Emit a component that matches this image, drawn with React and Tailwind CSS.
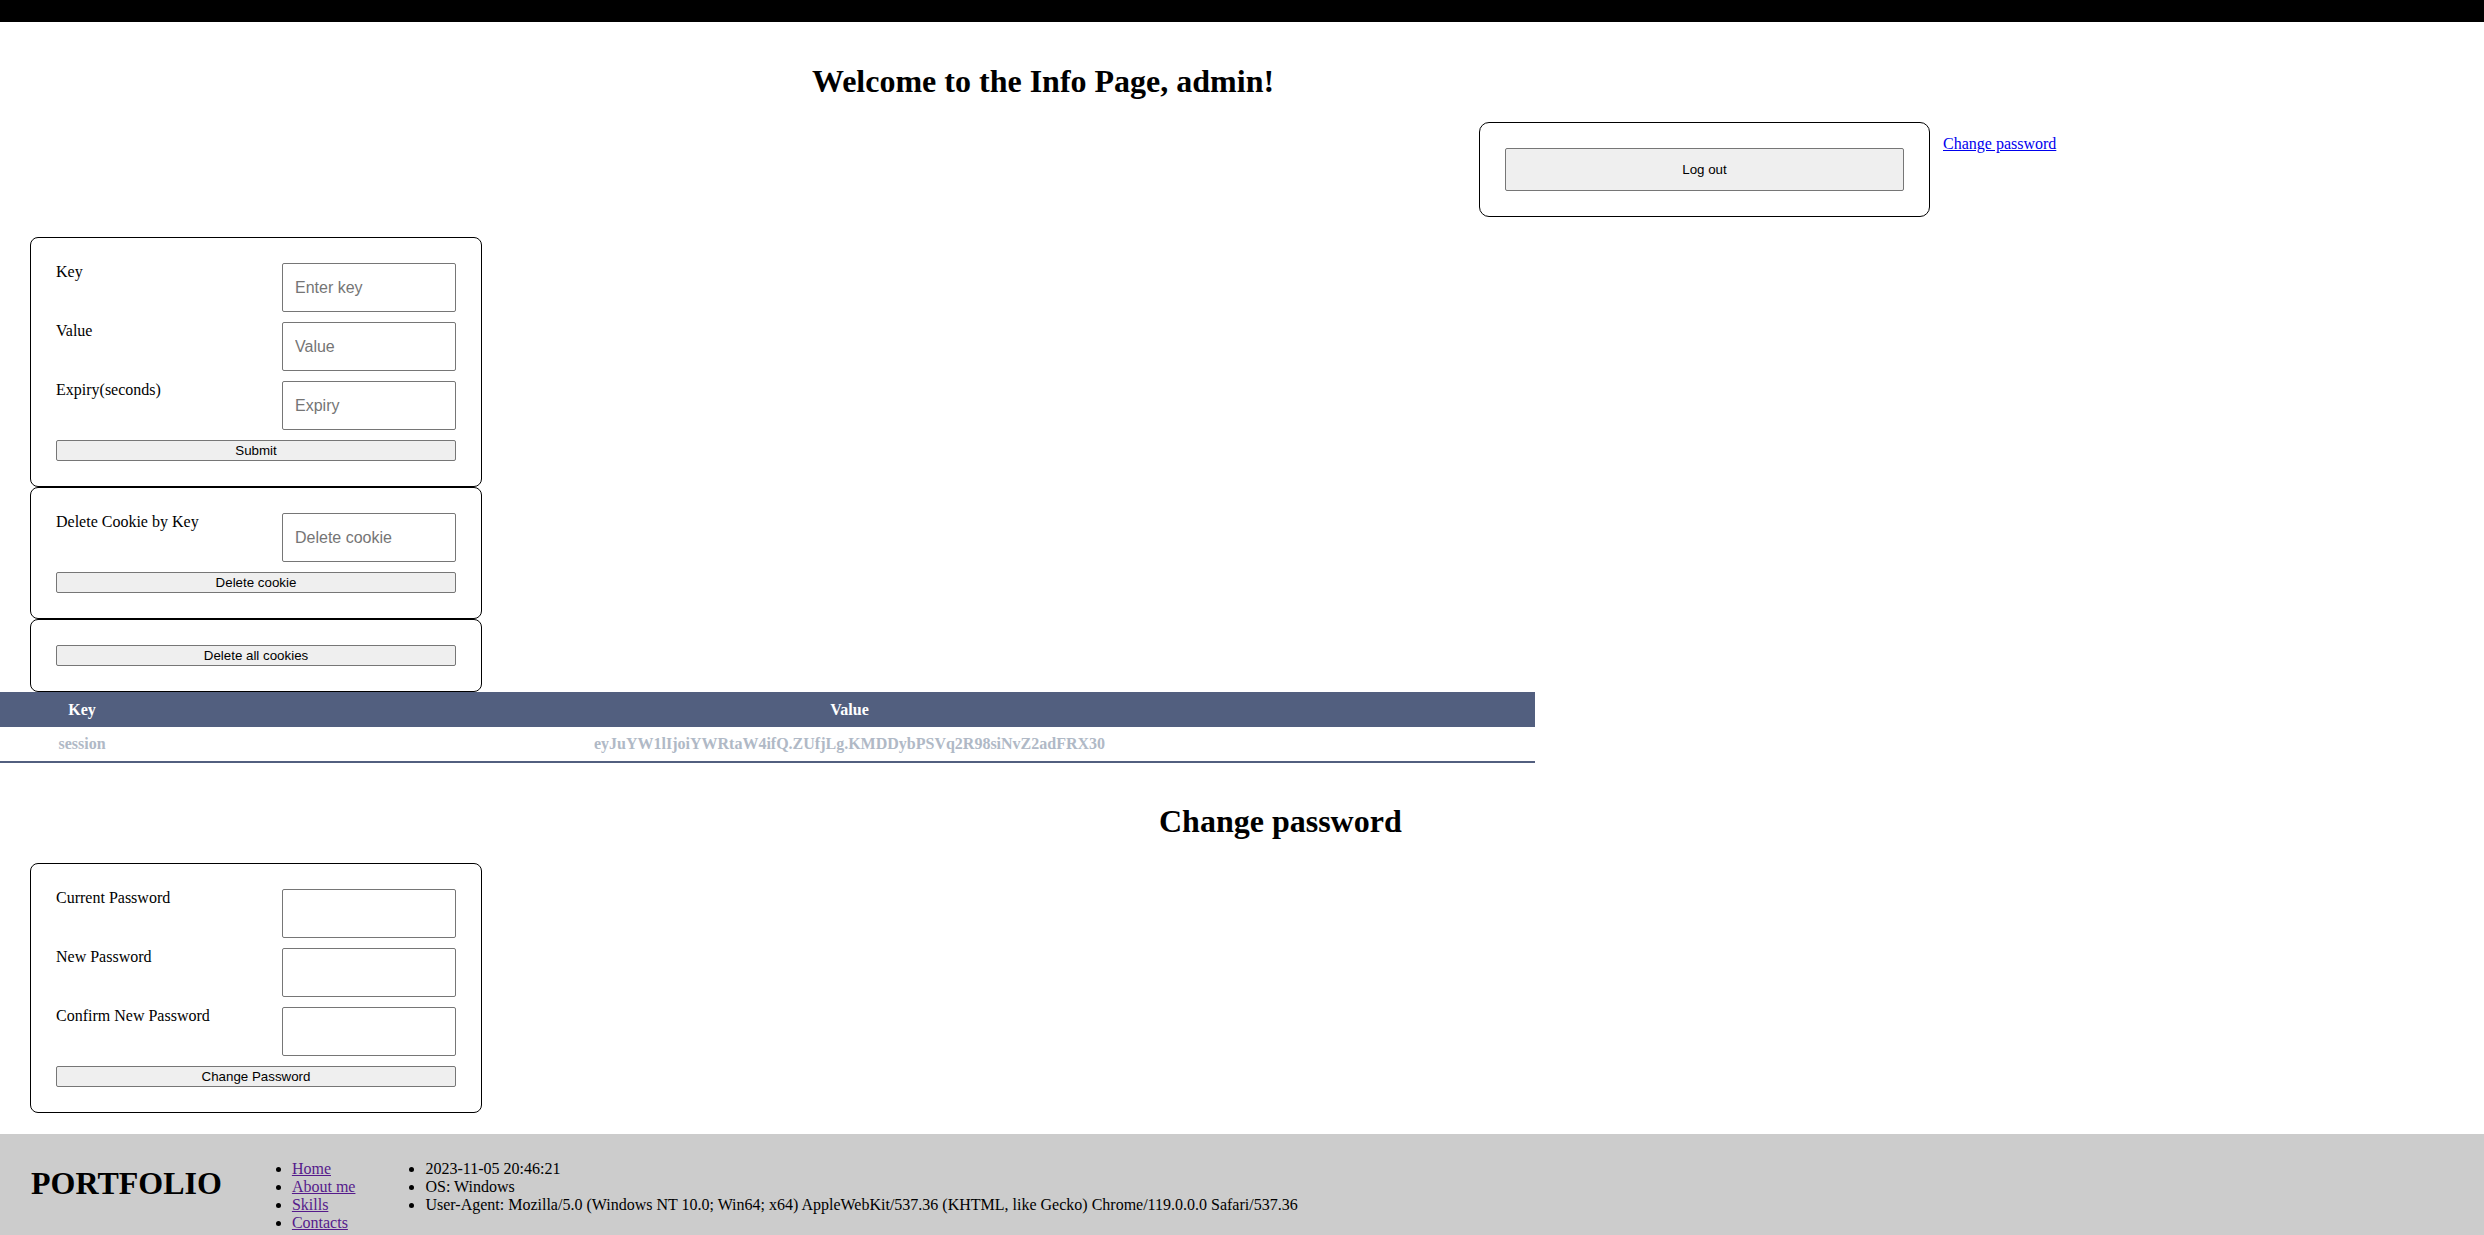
import React from "react";

const serif = "font-['Liberation_Serif',serif]";
const sans = "font-['Liberation_Sans',Arial,sans-serif]";

function Btn({ children, className = "" }) {
  return (
    <button
      className={`${sans} block w-full bg-[#efefef] border border-[#767676] rounded-[2px] text-[13.33px] text-black ${className}`}
    >
      {children}
    </button>
  );
}

function Field({ label, placeholder }) {
  return (
    <>
      <div className="text-[16px] leading-[18px]">{label}</div>
      <input
        placeholder={placeholder}
        className={`${sans} block w-[174px] h-[49px] border border-[#767676] rounded-[2px] px-[12px] text-[16px] placeholder:text-[#757575]`}
      />
    </>
  );
}

function FormBox({ fields, button }) {
  return (
    <div className="w-[452px] border border-black rounded-[8px] p-[25px]">
      {fields.length > 0 && (
        <div className="grid grid-cols-[226px_174px] gap-y-[10px] mb-[10px]">
          {fields.map((f) => (
            <Field key={f.label} label={f.label} placeholder={f.placeholder} />
          ))}
        </div>
      )}
      <Btn className="h-[21px]">{button}</Btn>
    </div>
  );
}

export default function App() {
  const cookieFields = [
    { label: "Key", placeholder: "Enter key" },
    { label: "Value", placeholder: "Value" },
    { label: "Expiry(seconds)", placeholder: "Expiry" },
  ];
  const pwFields = [
    { label: "Current Password", placeholder: "" },
    { label: "New Password", placeholder: "" },
    { label: "Confirm New Password", placeholder: "" },
  ];

  return (
    <div className={`${serif} text-black bg-white w-[2484px] min-h-[1235px]`}>
      <div className="h-[22px] bg-black" />

      <h1 className="w-[2086px] text-center text-[32px] font-bold leading-[37px] mt-[41px] mb-[22px]">
        Welcome to the Info Page, admin!
      </h1>

      {/* log out row */}
      <div className="flex items-start ml-[1479px]">
        <div className="w-[451px] border border-black rounded-[10px] p-[25px]">
          <Btn className="h-[43px] w-[400px]">Log out</Btn>
        </div>
        <a href="#" className="ml-[13px] mt-[10px] text-[16px] text-[#0000ee] underline">
          Change password
        </a>
      </div>

      {/* cookie forms */}
      <div className="ml-[30px] mt-[20px]">
        <FormBox fields={cookieFields} button="Submit" />
        <FormBox fields={[{ label: "Delete Cookie by Key", placeholder: "Delete cookie" }]} button="Delete cookie" />
        <FormBox fields={[]} button="Delete all cookies" />
      </div>

      {/* cookies table */}
      <div className="w-[1535px] text-[16px] font-bold">
        <div className="grid grid-cols-[164px_1fr] h-[35px] items-center bg-[#525f7f] text-white">
          <div className="text-center">Key</div>
          <div className="text-center">Value</div>
        </div>
        <div className="grid grid-cols-[164px_1fr] h-[36px] items-center border-b-2 border-[#525f7f] text-[#b0b9c6]">
          <div className="text-center">session</div>
          <div className="text-center">eyJuYW1lIjoiYWRtaW4ifQ.ZUfjLg.KMDDybPSVq2R98siNvZ2adFRX30</div>
        </div>
      </div>

      <h2 className="pl-[1159px] text-[32px] font-bold leading-[37px] mt-[40px] mb-[23px]">
        Change password
      </h2>

      <div className="ml-[30px]">
        <FormBox fields={pwFields} button="Change Password" />
      </div>

      {/* footer */}
      <footer className="mt-[21px] bg-[#cccccc] flex items-start gap-[30px] pl-[31px] pt-[10px] pb-[10px] text-[16px]">
        <h1 className="text-[32px] font-bold leading-[37px] mt-[21px]">PORTFOLIO</h1>
        <ul className="list-disc pl-[40px] mt-[16px] leading-[18px]">
          {["Home", "About me", "Skills", "Contacts", "Logout"].map((l) => (
            <li key={l}>
              <a href="#" className="text-[#551a8b] underline">{l}</a>
            </li>
          ))}
        </ul>
        <ul className="list-disc pl-[40px] mt-[16px] leading-[18px]">
          <li>2023-11-05 20:46:21</li>
          <li>OS: Windows</li>
          <li>
            User-Agent: Mozilla/5.0 (Windows NT 10.0; Win64; x64) AppleWebKit/537.36 (KHTML, like Gecko) Chrome/119.0.0.0 Safari/537.36
          </li>
        </ul>
      </footer>
    </div>
  );
}
